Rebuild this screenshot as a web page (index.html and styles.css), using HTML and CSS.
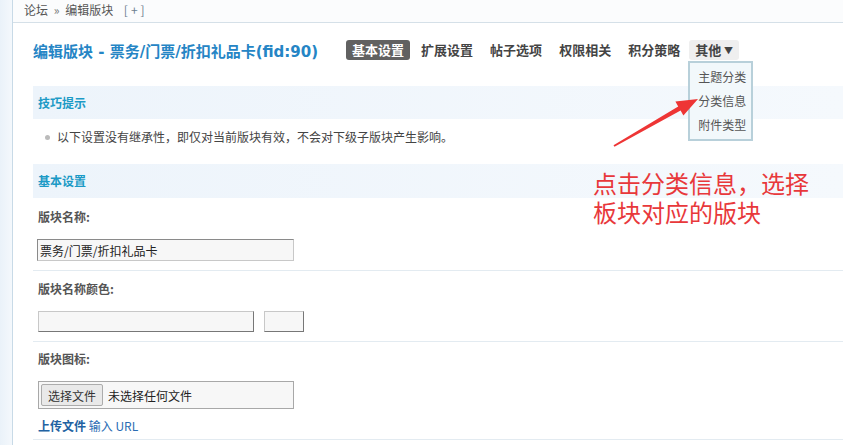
FILE: index.html
```html
<!DOCTYPE html>
<html lang="zh-CN">
<head>
    <meta charset="UTF-8">
    <title>编辑版块</title>
    <link rel="stylesheet" href="styles.css">
</head>
<body>
    <div class="side"></div>
    <div class="main">
        <div class="crumb">论坛 <span class="sep">&raquo;</span> 编辑版块 <span class="plus">[+]</span></div>

        <div class="content">
            <div class="title-row">
                <h3 class="title">编辑版块 - 票务/门票/折扣礼品卡(fid:90)</h3>
                <ul class="tabs">
                    <li class="current">基本设置</li>
                    <li>扩展设置</li>
                    <li>帖子选项</li>
                    <li>权限相关</li>
                    <li>积分策略</li>
                    <li class="more">其他 <span class="caret">▼</span>
                        <ul class="dropdown">
                            <li>主题分类</li>
                            <li>分类信息</li>
                            <li>附件类型</li>
                        </ul>
                    </li>
                </ul>
            </div>

            <div class="sec-head tip-head">技巧提示</div>
            <div class="tip-body"><span class="dot"></span>以下设置没有继承性，即仅对当前版块有效，不会对下级子版块产生影响。</div>

            <div class="sec-head">基本设置</div>

            <div class="row row-name">
                <div class="label">版块名称:</div>
                <input class="txt" type="text" value="票务/门票/折扣礼品卡">
            </div>

            <div class="row row-color">
                <div class="label">版块名称颜色:</div>
                <div class="color-line">
                    <input class="txt txt-color" type="text">
                    <input class="txt txt-swatch" type="text">
                </div>
            </div>

            <div class="row row-icon">
                <div class="label">版块图标:</div>
                <div class="file-box"><button class="file-btn">选择文件</button><span class="file-none">未选择任何文件</span></div>
                <div class="links"><a class="upload">上传文件</a> <a>输入 URL</a></div>
            </div>
        </div>
    </div>

    <!-- annotation on top of the screenshot -->
    <svg class="arrow" width="100" height="60" viewBox="0 0 100 60">
        <polygon points="14.5,56.8 80.6,20.4 83.4,25.6 98,9 75.4,11.6 78.2,16.6 13.5,55.2" fill="#ee3535"/>
    </svg>
    <div class="note">
        <div class="note-line">点击分类信息，选择</div>
        <div class="note-line">板块对应的版块</div>
    </div>
</body>
</html>
```

FILE: styles.css
```css
body {
    margin: 0;
    display: flex;
    min-height: 445px;
    font-family: "Noto Sans CJK SC", "Liberation Sans", sans-serif;
    font-size: 12px;
    color: #333;
    background-color: #fff;
    overflow: hidden;
}
.side {
    width: 12px;
    flex-shrink: 0;
    background: linear-gradient(to right, #eaf2f9, #f4f8fc);
    border-right: 1px solid #c8dae7;
}
.main {
    flex: 1;
    min-width: 0;
}
.crumb {
    height: 22px;
    line-height: 20px;
    padding-left: 11px;
    color: #555;
    background-color: #fbfcfd;
    border-bottom: 1px solid #d5e0e8;
}
.crumb .sep {
    margin: 0 3px;
    color: #777;
}
.crumb .plus {
    margin-left: 8px;
    color: #6d7f8f;
    letter-spacing: 3px;
}
.content {
    padding-left: 20px;
}
.title-row {
    display: flex;
    align-items: center;
    height: 20px;
    margin-top: 17px;
}
.title {
    margin: 0 28px 0 0;
    font-family: "DejaVu Sans", "Noto Sans CJK SC", sans-serif;
    font-size: 15px;
    font-weight: bold;
    color: #2585c5;
    white-space: nowrap;
}
.tabs {
    display: flex;
    margin: 0;
    padding: 0;
    list-style: none;
}
.tabs > li {
    position: relative;
    height: 20px;
    line-height: 20px;
    padding: 0 6px;
    margin-right: 5px;
    font-size: 13px;
    font-weight: bold;
    color: #444;
    border-radius: 3px;
    white-space: nowrap;
}
.tabs > li.current {
    background-color: #616161;
    color: #fff;
}
.tabs > li.more {
    background-color: #efefef;
    margin-left: -2px;
}
.caret {
    font-size: 9px;
    vertical-align: 1px;
}
.dropdown {
    position: absolute;
    top: 21px;
    left: -1px;
    margin: 0;
    padding: 2px 0;
    list-style: none;
    background-color: #f2f8fb;
    border: 2px solid #b8d0da;
}
.dropdown li {
    height: 24px;
    line-height: 24px;
    padding: 0 5px 0 8px;
    font-size: 12px;
    font-weight: normal;
    color: #555;
}
.sec-head {
    height: 34px;
    line-height: 34px;
    padding-left: 5px;
    font-weight: bold;
    color: #1c9ac6;
    background: linear-gradient(to right, #edf4fb, #f5f9fd);
}
.tip-head {
    margin-top: 26px;
    height: 33px;
    line-height: 33px;
}
.tip-body {
    display: flex;
    align-items: flex-start;
    height: 45px;
    box-sizing: border-box;
    padding: 9px 0 0 24px;
    line-height: 18px;
    color: #444;
}
.dot {
    width: 5px;
    height: 5px;
    margin: 7px 7px 0 -12px;
    border-radius: 50%;
    background-color: #bbb;
}
.row {
    padding-left: 5px;
    border-bottom: 1px solid #e3ebf1;
}
.label {
    height: 18px;
    line-height: 18px;
    font-weight: bold;
    color: #555;
}
.row-name {
    padding-top: 10px;
    padding-bottom: 9px;
}
.row-color {
    padding-top: 9px;
    padding-bottom: 9px;
}
.row-icon {
    padding-top: 8px;
    padding-bottom: 4px;
}
.txt {
    display: block;
    box-sizing: border-box;
    margin: 13px 0 0 -1px;
    width: 257px;
    height: 22px;
    padding: 0 2px;
    font-family: "Noto Sans CJK SC", "Liberation Sans", sans-serif;
    font-size: 12px;
    color: #222;
    background-color: #f7f7f7;
    border: 1px solid;
    border-color: #8a8a8a #c8c8c8 #c8c8c8 #8a8a8a;
}
.color-line {
    display: flex;
    margin-top: 13px;
}
.color-line .txt {
    margin: 0;
    height: 21px;
    border-color: #c8c8c8 #777 #777 #c8c8c8;
}
.txt-color {
    width: 216px;
}
.color-line .txt-swatch {
    width: 40px;
    margin-left: 10px;
}
.file-box {
    display: flex;
    align-items: center;
    box-sizing: border-box;
    width: 256px;
    height: 28px;
    margin-top: 13px;
    padding-left: 2px;
    background-color: #f7f7f7;
    border: 1px solid #a8a8a8;
}
.file-btn {
    height: 22px;
    padding: 0 6px;
    font-family: "Noto Sans CJK SC", "Liberation Sans", sans-serif;
    font-size: 12px;
    color: #333;
    background-color: #e9e9e9;
    border: 1px solid #acacac;
    border-radius: 2px;
}
.file-none {
    margin-left: 5px;
    color: #222;
}
.links {
    height: 18px;
    line-height: 18px;
    margin-top: 8px;
}
.links a {
    color: #2a6cb3;
}
.links a.upload {
    font-weight: bold;
    color: #2262a2;
}
.arrow {
    position: absolute;
    left: 600px;
    top: 90px;
}
.note {
    position: absolute;
    left: 593px;
    top: 168px;
    font-size: 24px;
    color: #e8383b;
}
.note-line {
    height: 29px;
    line-height: 29px;
}
```
